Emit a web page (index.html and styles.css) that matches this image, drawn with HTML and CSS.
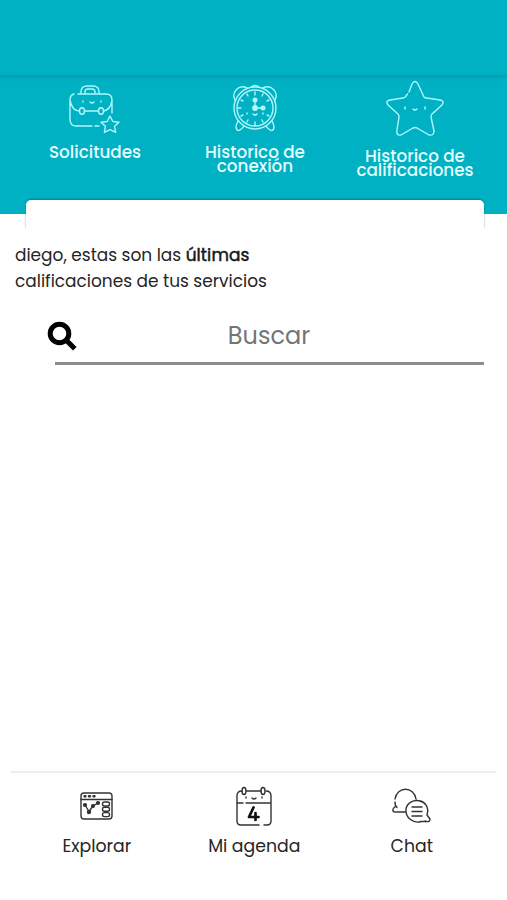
FILE: index.html
```html
<!DOCTYPE html>
<html lang="es">
<head>
<meta charset="utf-8">
<meta name="viewport" content="width=device-width">
<title>Historico de calificaciones</title>
<link rel="stylesheet" href="styles.css">
</head>
<body>
<header class="hero">
  <div class="topbar"></div>
  <nav class="tabs">
    <a class="tab">
      <svg class="tab-icon bag" width="52" height="56" viewBox="0 0 52 56">
        <path d="M6 9Q2 10 2 15V34Q2 41 8 41H24M27 41H31M10 9H38Q44 9 44 15V28M2 15Q4 26 11.500 26M16.500 26H30.500M35.500 26Q42 25 44 16M13 9V7Q13 1 19 1H25Q31 1 31 7V9M17 9V7Q17 4 20 4H24Q27 4 27 7V9"/>
        <ellipse cx="14" cy="26" rx="2.5" ry="3.300"/><ellipse cx="33" cy="26" rx="2.500" ry="3.300"/>
        <path d="M15 16v1M33 16v1M22 17q2 2 4 0M42 31l2.800 5.500 6.200.8-4.500 4 1.200 6-5.700-2.700-5.600 2.800 1-6.100-4.400-4 6.200-.8z"/>
      </svg>
      <span class="tab-label">Solicitudes</span>
    </a>
    <a class="tab">
      <svg class="tab-icon" width="46" height="56" viewBox="0 0 46 56">
        <circle cx="23" cy="23" r="21"/><circle cx="23" cy="23" r="18"/>
        <path d="M3 15C-1 7 7-1 15 3M31 3C39-1 47 7 43 15M19 2Q23-1 27 2M6 36C2 43 5 47 8 45Q11 43 12 41M40 36C44 43 41 47 38 45Q35 43 34 41M23 7v3M15 9l1 2M31 9l-1 2M9 15l2 1M37 15l-2 1M6 23h3M9 31l2-1M37 31l-2-1M15 37l1-2M31 37l-1-2M23 37v3M23 16v5M25 23h5M15 28v1M31 28v1M21 29q2 2 4 0"/>
        <circle class="dot" cx="23" cy="15" r="1.800"/><circle class="dot" cx="23" cy="23" r="2.200"/><circle class="dot" cx="31" cy="23" r="1.800"/>
      </svg>
      <span class="tab-label">Historico de<br>conexión</span>
    </a>
    <a class="tab">
      <svg class="tab-icon star" width="58" height="60" viewBox="0 0 58 60">
        <path d="M23 12L26 4Q29-1 32 4L38 17Q39 18 41 18L54 20Q59 21 56 25L46 34Q45 35 45 37L48 51Q48 56 43 55L31 48Q29 47 27 48L15 55Q10 56 11 50L13 37Q13 35 12 34L2 25Q-1 21 4 20L17 18Q19 18 20 16L21.500 14M19 27v2M39 27v2M27 29q2 2 4 0"/>
      </svg>
      <span class="tab-label">Historico de<br>calificaciones</span>
    </a>
  </nav>
</header>
<main>
  <div class="sheet"></div>
  <p class="intro">diego, estas son las <b>últimas</b><br>calificaciones de tus servicios</p>
  <div class="search">
    <svg class="search-icon" width="30" height="30" viewBox="0 0 30 30"><circle cx="11.500" cy="11.500" r="9.300"/><path d="M18 18l8.800 8.800"/></svg>
    <span class="placeholder">Buscar</span>
  </div>
</main>
<footer class="bottom">
  <a class="item">
    <svg class="explore" width="34" height="42" viewBox="0 0 34 42">
      <rect x="1" y="8" width="31" height="26" rx="3"/><path d="M1 14.500h31"/><path class="keys" d="M4.500 11.300h1M9 11.300h1M13.500 11.300h1"/><path d="M5 20l4 6.500 4-5.500 5-3"/>
      <circle class="ink" cx="5" cy="20" r="1.400"/><circle class="ink" cx="9" cy="27" r="1.500"/><circle class="ink" cx="13" cy="21" r="1.400"/><circle class="ink" cx="18" cy="18" r="1.400"/>
      <rect x="22.500" y="17" width="7" height="4" rx="1.800"/><rect x="22.500" y="22.300" width="7" height="4" rx="1.800"/><rect x="22.500" y="27.600" width="7" height="4" rx="1.800"/>
    </svg>
    <span>Explorar</span>
  </a>
  <a class="item">
    <svg width="38" height="42" viewBox="0 0 38 42">
      <path d="M7 5Q2 5 2 10V35Q2 39 6 39H24M29 39H32Q36 39 36 35V10Q36 5 31 5M11 5H26M2 17h6M11 17H36M11 11v1M27 11v1M17 12q2 2 4 0"/>
      <ellipse cx="9" cy="5" rx="2" ry="3.500"/><ellipse cx="28" cy="5" rx="2" ry="3.500"/>
      <path class="four" d="M18.500 21.500l-4.500 9.500h9.500M20.500 27v7"/>
    </svg>
    <span>Mi agenda</span>
  </a>
  <a class="item">
    <svg width="40" height="42" viewBox="0 0 40 42">
      <path d="M3 13C5 0 22 0 24 13M3 16Q3 20 5 21.500M4 20Q0 23 1 25 2 26.500 5 26H14M33 35Q38 37 38 33L35 29C40 12 16 10 14 23 13 32 22 38 29 35.500H34M20 21h10M20 25.500h10M20 30h10"/>
    </svg>
    <span>Chat</span>
  </a>
</footer>
</body>
</html>
```
FILE: styles.css
```css
* { box-sizing: border-box; }
body {
  margin: 0;
  height: 900px;
  display: flex;
  flex-direction: column;
  background: #fff;
  color: #252525;
  font-family: Poppins, Inter, sans-serif;
}
svg { fill: none; stroke: currentColor; stroke-linecap: round; stroke-linejoin: round; overflow: visible; }
.hero { height: 214px; background: #00b1c3; color: #b0f7fb; }
.topbar { height: 76px; border-bottom: 1px solid #029eb0; box-shadow: 0 0 4px #007e8dcc; }
.tabs { display: flex; padding: 0 12px 0 15px; }
.tab { width: 160px; display: flex; flex-direction: column; align-items: center; padding-top: 9px; }
.tab-icon { stroke-width: 1.4; }
.tab-icon.bag { margin-left: -3px; }
.tab-icon.star { margin-top: -5px; margin-bottom: 5px; }
.dot { fill: currentColor; }
.tab-label { font-size: 16.8px; font-weight: 500; line-height: 14px; text-align: center; margin-top: 4px; white-space: nowrap; color: #e4fdff; }
main { flex: 1; }
.sheet {
  height: 29px;
  margin: -14px 23px 0 26px;
  border-radius: 5px 5px 0 0;
  background: linear-gradient(#fff, #fefefe);
  box-shadow: 0 -1px 2px #00637099;
  clip-path: inset(-4px -2px 0 -2px);
}
.intro { margin: 13px 15px 0; font-size: 16.95px; line-height: 26px; white-space: nowrap; }
.intro b { font-weight: 400; -webkit-text-stroke: 0.5px #171717; color: #171717; letter-spacing: 0.1px; }
.search { display: flex; align-items: center; height: 58px; margin: 13px 23px 0 55px; border-bottom: 3px solid #8a8d8c; }
.search-icon { margin: 5px 0 0 -7px; color: #000; stroke-width: 5; stroke-linecap: butt; flex: none; }
.placeholder { flex: 1; padding: 1px 24px 0 0; text-align: center; font-size: 24px; color: #757575; }
.bottom { height: 129px; margin: 0 11px; border-top: 2px solid #eee; display: flex; padding-left: 7px; }
.item { width: 157.5px; display: flex; flex-direction: column; align-items: center; padding-top: 13px; font-size: 17.3px; line-height: 24px; }
.item svg { stroke-width: 1.4; color: #333; }
.item .explore { margin-top: -1px; margin-bottom: 1px; }
.item .keys { stroke-width: 2.4; }
.item span { margin-top: 6px; }
.ink { fill: currentColor; }
.four { stroke-width: 2.7; stroke: #111; }
```
